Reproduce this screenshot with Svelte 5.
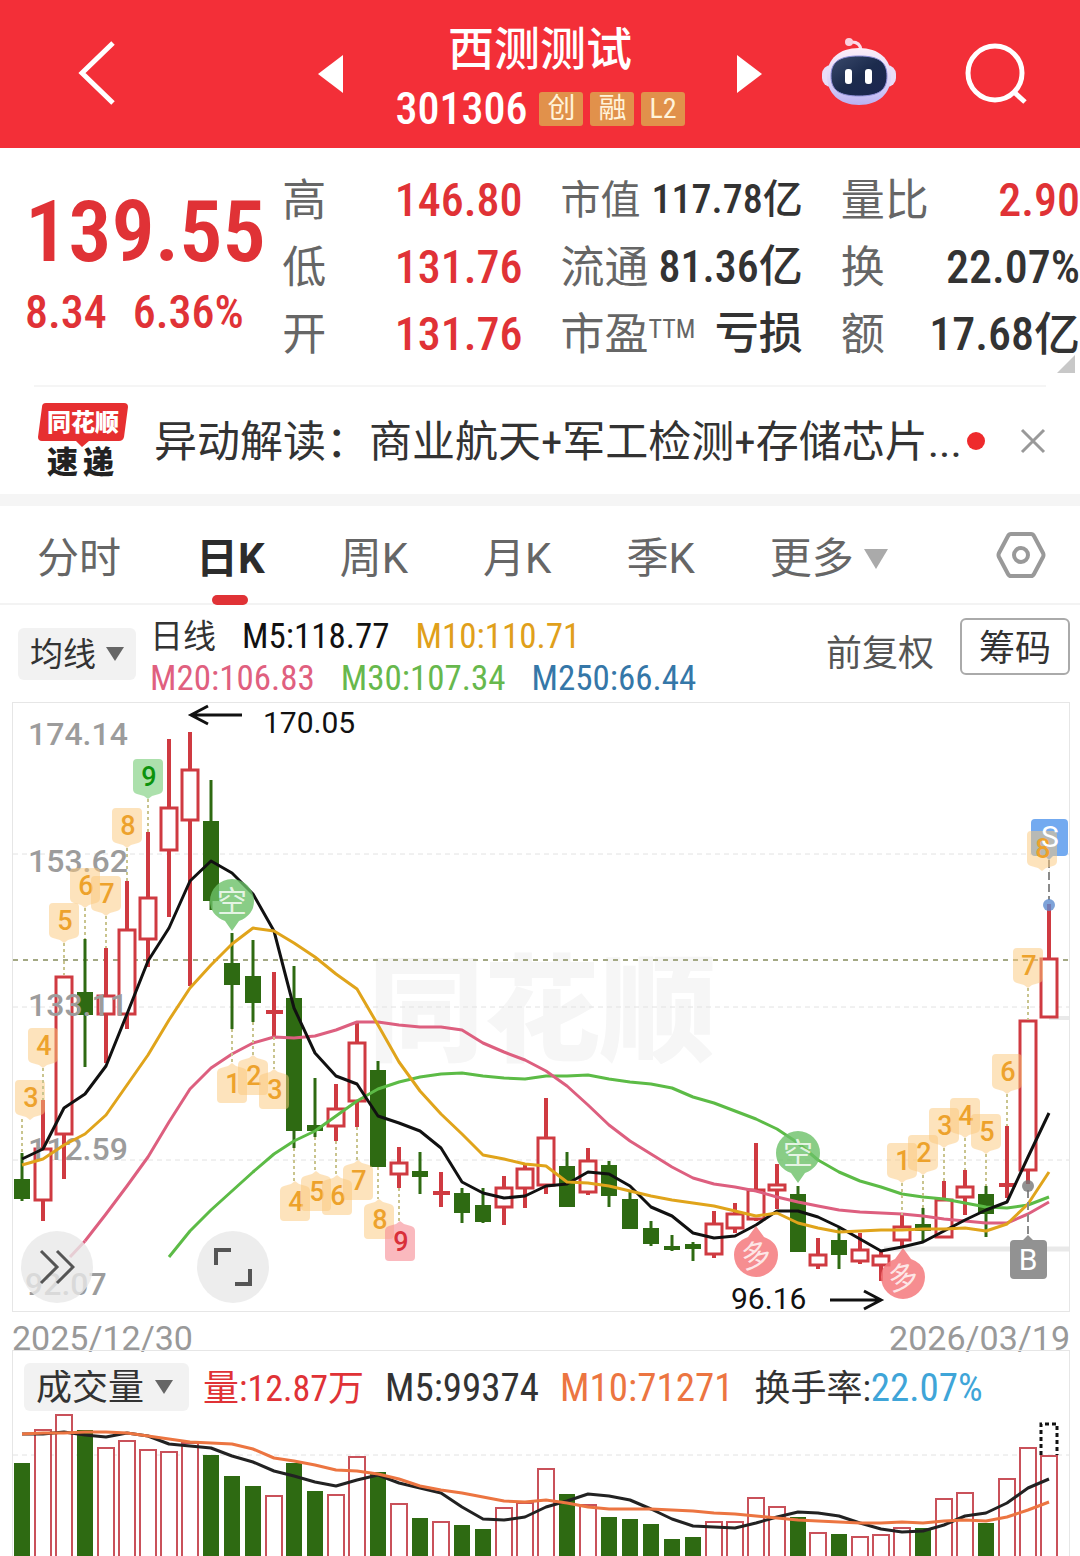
<script lang="ts">
    const tabs = ['分时', '日K', '周K', '月K', '季K'];
    let activeTab = $state('日K');
    let newsOpen = $state(true);

    const FIRST_X = 22;
    const STEP = 20.96;
    const x = (i: number) => Math.round(FIRST_X + i * STEP);

    // [rising, high, body top, body bottom, low]
    const candles = [
        [0, 1153, 1179, 1199, 1201], [1, 1100, 1148, 1201, 1221], [1, 976, 976, 1135, 1179],
        [0, 939, 992, 1015, 1067], [1, 948, 995, 1015, 1063], [1, 881, 929, 1015, 1029],
        [1, 832, 897, 940, 967], [1, 739, 807, 851, 917], [1, 732, 769, 821, 986],
        [0, 780, 821, 901, 910], [0, 933, 963, 985, 1029], [0, 940, 976, 1003, 1022],
        [1, 972, 1012, 1012, 1037], [0, 966, 998, 1131, 1148], [0, 1078, 1125, 1131, 1137],
        [1, 1084, 1108, 1127, 1141], [1, 1023, 1042, 1102, 1127], [0, 1061, 1070, 1167, 1167],
        [1, 1147, 1162, 1175, 1188], [0, 1152, 1171, 1177, 1194], [1, 1172, 1193, 1193, 1207],
        [0, 1188, 1193, 1213, 1223], [0, 1188, 1205, 1222, 1223], [1, 1176, 1187, 1208, 1225],
        [1, 1165, 1168, 1189, 1208], [1, 1098, 1137, 1186, 1194], [0, 1152, 1166, 1207, 1207],
        [1, 1148, 1160, 1193, 1195], [0, 1161, 1165, 1196, 1207], [0, 1192, 1199, 1229, 1229],
        [0, 1221, 1228, 1244, 1246], [0, 1235, 1246, 1250, 1251], [0, 1242, 1244, 1249, 1261],
        [1, 1211, 1223, 1255, 1258], [1, 1203, 1213, 1229, 1233], [1, 1143, 1189, 1220, 1221],
        [1, 1164, 1184, 1191, 1209], [0, 1186, 1194, 1252, 1252], [1, 1238, 1254, 1266, 1269],
        [0, 1228, 1240, 1255, 1269], [1, 1233, 1249, 1262, 1264], [1, 1251, 1255, 1266, 1281],
        [1, 1215, 1226, 1241, 1247], [0, 1208, 1224, 1231, 1241], [1, 1181, 1199, 1238, 1238],
        [1, 1170, 1186, 1198, 1215], [0, 1186, 1194, 1214, 1237], [1, 1126, 1185, 1185, 1198],
        [1, 1020, 1020, 1171, 1184], [1, 904, 958, 1018, 1018]
    ];

    const averages = [
        {color: '#5cbb46', from: 7, ys: [1257, 1231, 1210, 1191, 1172, 1154, 1141, 1131, 1116, 1101, 1089, 1082, 1077, 1074, 1073, 1076, 1078, 1079, 1076, 1076, 1075, 1079, 1082, 1084, 1088, 1097, 1103, 1111, 1119, 1129, 1143, 1160, 1172, 1181, 1187, 1194, 1197, 1199, 1203, 1207, 1208, 1205, 1197]},
        {color: '#dd5f7f', from: 3, ys: [1241, 1214, 1186, 1157, 1122, 1089, 1068, 1054, 1043, 1037, 1038, 1036, 1030, 1022, 1022, 1025, 1027, 1027, 1030, 1043, 1052, 1060, 1071, 1086, 1105, 1125, 1141, 1154, 1167, 1178, 1184, 1187, 1191, 1197, 1202, 1206, 1210, 1212, 1213, 1214, 1216, 1219, 1221, 1223, 1223, 1214, 1202]},
        {color: '#111111', from: 0, ys: [1159, 1149, 1108, 1094, 1066, 1014, 961, 928, 881, 861, 873, 894, 931, 1008, 1053, 1076, 1084, 1116, 1123, 1131, 1148, 1182, 1193, 1198, 1196, 1186, 1184, 1172, 1174, 1186, 1207, 1216, 1233, 1238, 1236, 1225, 1211, 1211, 1217, 1227, 1239, 1251, 1247, 1242, 1231, 1220, 1210, 1202, 1157, 1113]},
        {color: '#e0a41b', from: 0, ys: [1165, 1159, 1145, 1134, 1115, 1085, 1055, 1020, 988, 965, 944, 928, 931, 943, 957, 974, 989, 1025, 1062, 1091, 1114, 1134, 1155, 1159, 1164, 1166, 1182, 1183, 1186, 1191, 1196, 1200, 1203, 1206, 1211, 1216, 1213, 1223, 1228, 1232, 1231, 1230, 1230, 1229, 1229, 1228, 1231, 1224, 1204, 1172]}
    ];

    // [digit, candle, box centre, box top, dash start, dash end]
    const topTags = [
        [3, 0, 30, 1080, 1119, 1153], [4, 1, 43, 1028, 1068, 1100], [5, 2, 64, 903, 943, 975],
        [6, 3, 85, 868, 908, 939], [7, 4, 106, 876, 916, 948], [8, 5, 127, 808, 848, 881],
        [9, 6, 148, 759, 799, 832], [1, 42, 902, 1143, 1183, 1215], [2, 43, 923, 1135, 1175, 1208],
        [3, 44, 944, 1108, 1148, 1181], [4, 45, 965, 1098, 1138, 1170], [5, 46, 986, 1114, 1154, 1186],
        [6, 47, 1007, 1054, 1094, 1126], [7, 48, 1028, 948, 988, 1020], [8, 49, 1042, 831, 871, 871]
    ];
    const bottomTags = [
        [1, 10, 232, 1067, 1029, 1063], [2, 11, 253, 1059, 1022, 1055], [3, 12, 274, 1073, 1037, 1069],
        [4, 13, 295, 1185, 1148, 1181], [5, 14, 316, 1175, 1137, 1171], [6, 15, 337, 1179, 1141, 1175],
        [7, 16, 358, 1164, 1127, 1160], [8, 17, 379, 1203, 1167, 1199], [9, 18, 400, 1225, 1188, 1221]
    ];

    const axis = [[28, 745, '174.14'], [28, 872, '153.62'], [28, 1016, '133.11'], [28, 1160, '112.59'], [25, 1295, '92.07']];

    // [rising, bar top]
    const volumes = [
        [0, 1463], [1, 1430], [1, 1415], [0, 1430], [1, 1448], [1, 1441], [1, 1450], [1, 1452], [1, 1443], [0, 1455],
        [0, 1476], [0, 1486], [1, 1496], [0, 1463], [0, 1491], [1, 1495], [1, 1457], [0, 1472], [1, 1504], [0, 1518],
        [1, 1522], [0, 1525], [0, 1529], [1, 1508], [1, 1503], [1, 1469], [0, 1494], [1, 1505], [0, 1517], [0, 1519],
        [0, 1524], [0, 1539], [0, 1537], [1, 1522], [1, 1522], [1, 1498], [1, 1507], [0, 1517], [1, 1533], [0, 1534],
        [1, 1537], [1, 1535], [1, 1528], [0, 1528], [1, 1499], [1, 1493], [0, 1523], [1, 1479], [1, 1448], [1, 1456]
    ];
    const volumeAverages = [
        {color: '#222222', from: 0, ys: [1434, 1434, 1432, 1435, 1437, 1433, 1436, 1444, 1446, 1448, 1456, 1462, 1471, 1476, 1482, 1486, 1480, 1475, 1483, 1488, 1493, 1507, 1519, 1520, 1517, 1507, 1501, 1494, 1496, 1500, 1509, 1519, 1526, 1527, 1528, 1523, 1517, 1512, 1513, 1516, 1523, 1529, 1532, 1531, 1525, 1516, 1513, 1503, 1488, 1479]},
        {color: '#ec7541', from: 0, ys: [1434, 1433, 1433, 1432, 1432, 1433, 1436, 1439, 1442, 1443, 1444, 1449, 1458, 1461, 1465, 1470, 1471, 1474, 1479, 1486, 1490, 1493, 1497, 1501, 1502, 1500, 1503, 1507, 1509, 1509, 1509, 1510, 1511, 1513, 1514, 1516, 1518, 1520, 1521, 1522, 1523, 1523, 1522, 1523, 1521, 1520, 1521, 1517, 1510, 1502]}
    ];

    const line = (from: number, ys: number[]) => ys.map((y, i) => `${x(from + i)},${y}`).join(' ');

    const tagDown = (cx: number, top: number) =>
        `M${cx - 11} ${top}h22q4 0 4 4v26q0 4-4 5l-7 2-4 3-4-3-7-2q-4-1-4-5v-26q0-4 4-4z`;
    const tagUp = (cx: number, top: number) =>
        `M${cx - 11} ${top + 36}h22q4 0 4-4v-26q0-4-4-5l-7-2-4-3-4 3-7 2q-4 1-4 5v26q0 4 4 4z`;
</script>

<main>
    <header class="top">
        <button class="icon back" aria-label="返回">
            <svg width="40" height="68" viewBox="0 0 40 68"><path d="M36 3 5 33l31 30" fill="none" stroke="#fff" stroke-width="5"/></svg>
        </button>
        <div class="stock">
            <button class="icon" aria-label="上一只">
                <svg width="25" height="38" viewBox="0 0 25 38"><path d="M25 0v38L0 19z" fill="#fff"/></svg>
            </button>
            <div class="stock-title">
                <h1>西测测试</h1>
                <p class="code"><b>301306</b><span>创</span><span>融</span><span>L2</span></p>
            </div>
            <button class="icon" aria-label="下一只">
                <svg width="25" height="38" viewBox="0 0 25 38"><path d="M0 0v38l25-19z" fill="#fff"/></svg>
            </button>
        </div>
        <div class="top-actions">
            <button class="icon" aria-label="智能助手">
                <svg width="74" height="72" viewBox="0 0 74 72">
                    <defs>
                        <linearGradient id="shell" x1="0" y1="0" x2="0" y2="1">
                            <stop offset="0" stop-color="#fdeef8"/><stop offset=".6" stop-color="#dcd4f8"/><stop offset="1" stop-color="#b9b0f2"/>
                        </linearGradient>
                        <linearGradient id="visor" x1="0" y1="0" x2="1" y2="1">
                            <stop offset="0" stop-color="#3a4a6c"/><stop offset=".5" stop-color="#1c2b4d"/><stop offset="1" stop-color="#1b2450"/>
                        </linearGradient>
                    </defs>
                    <path d="M28 4q10-1 11 8" fill="none" stroke="#fbdcea" stroke-width="3"/>
                    <circle cx="27" cy="4" r="4" fill="#fbd0de"/>
                    <rect x="0" y="27" width="74" height="22" rx="9" fill="#e9ddf8"/>
                    <path d="M37 10c20 0 32 11 32 28S57 67 37 67 5 55 5 38s12-28 32-28z" fill="url(#shell)"/>
                    <path d="M37 18c20 0 28 6 28 20s-8 20-28 20S9 52 9 38s8-20 28-20z" fill="url(#visor)" stroke="#8f8fd8" stroke-width="1"/>
                    <rect x="23" y="31" width="7" height="15" rx="3" fill="#fff"/>
                    <rect x="43" y="31" width="7" height="15" rx="3" fill="#fff"/>
                </svg>
            </button>
            <button class="icon" aria-label="搜索">
                <svg width="62" height="62" viewBox="0 0 62 62"><g fill="none" stroke="#fff" stroke-width="5"><circle cx="30" cy="30" r="27"/><path d="m49 49 11 10"/></g></svg>
            </button>
        </div>
    </header>

    <section class="quote">
        <div class="price">
            <strong>139.55</strong>
            <p><span>8.34</span><span>6.36%</span></p>
        </div>
        <dl>
            <div><dt>高</dt><dd class="up">146.80</dd></div>
            <div><dt>低</dt><dd class="up">131.76</dd></div>
            <div><dt>开</dt><dd class="up">131.76</dd></div>
        </dl>
        <dl class="cap">
            <div class="small"><dt>市值</dt><dd>117.78亿</dd></div>
            <div><dt>流通</dt><dd>81.36亿</dd></div>
            <div><dt>市盈<sup>TTM</sup></dt><dd>亏损</dd></div>
        </dl>
        <dl>
            <div><dt>量比</dt><dd class="up">2.90</dd></div>
            <div><dt>换</dt><dd>22.07%</dd></div>
            <div><dt>额</dt><dd>17.68亿</dd></div>
        </dl>
        <svg class="corner" width="18" height="18" viewBox="0 0 18 18"><path d="M18 0v18H0z" fill="#c8c8c8"/></svg>
    </section>

    {#if newsOpen}
        <section class="news">
            <svg class="logo" width="90" height="76" viewBox="0 0 90 76" role="img" aria-label="同花顺速递">
                <path d="M8 0h78q4 0 4 4l-4 30q-1 4-5 4H51l-7 6-6-6H4q-4 0-4-4L4 4q0-4 4-4z" fill="#e62f30"/>
                <text x="9" y="28" font-size="24" fill="#fff">同花顺</text>
                <text x="9" y="70" font-size="31" fill="#222">速</text>
                <text x="45" y="70" font-size="31" fill="#222">递</text>
            </svg>
            <a href="#news">异动解读：商业航天+军工检测+存储芯片...</a>
            <i class="dot"></i>
            <button class="icon" aria-label="关闭" onclick={() => newsOpen = false}>
                <svg width="26" height="26" viewBox="0 0 26 26"><path d="m2 2 22 22M24 2 2 24" stroke="#999" stroke-width="3"/></svg>
            </button>
        </section>
    {/if}

    <nav class="tabs">
        {#each tabs as tab (tab)}
            <button class:active={tab === activeTab} onclick={() => activeTab = tab}>{tab}</button>
        {/each}
        <button class="more">更多<svg width="24" height="20" viewBox="0 0 24 20"><path d="M0 0h24L12 20z" fill="#aaa"/></svg></button>
        <button class="settings" aria-label="设置">
            <svg width="50" height="48" viewBox="0 0 50 48"><g fill="none" stroke="#999" stroke-width="4"><path d="M15 3h20q2 0 3 2l9 17q1 2 0 4l-9 17q-1 2-3 2H15q-2 0-3-2L3 26q-1-2 0-4l9-17q1-2 3-2z"/><circle cx="25" cy="24" r="7"/></g></svg>
        </button>
    </nav>

    <section class="indicators">
        <label class="pick">
            <select aria-label="主图指标"><option>均线</option><option>布林</option></select>
            <svg width="18" height="14" viewBox="0 0 18 14"><path d="M0 0h18L9 14z" fill="#666"/></svg>
        </label>
        <div class="legend">
            <p><span class="period">日线</span><span class="m5">M5:118.77</span><span class="m10">M10:110.71</span></p>
            <p><span class="m20">M20:106.83</span><span class="m30">M30:107.34</span><span class="m250">M250:66.44</span></p>
        </div>
        <button class="adjust">前复权</button>
        <button class="chips">筹码</button>
    </section>

    <section class="frame">
        <svg class="chart" viewBox="13 703 1056 608">
            <text class="mark" x="368" y="1052" font-size="116">同花顺</text>
            <g stroke="#e2e2e2" stroke-dasharray="5 4">
                <path d="M13 854h1056M13 1007h1056M13 1160h1056"/>
            </g>
            <path d="M13 960h1056" stroke="#a3a883" stroke-width="2" stroke-dasharray="5 5"/>
            <path d="M884 1249h185" stroke="#e9e9e9" stroke-width="5"/>
            <path d="M1049 1018h20" stroke="#e9e9e9" stroke-width="4"/>

            {#each candles as [rising, high, top, bottom, low], i}
                {#if rising && top === bottom}
                    <path d={`M${x(i)} ${high}V${low}M${x(i) - 8} ${top}h17`} stroke="#cf3a41" stroke-width="4"/>
                {:else if rising}
                    <path d={`M${x(i)} ${high}V${top}M${x(i)} ${bottom}V${low}`} stroke="#cf3a41" stroke-width="4"/>
                    <rect x={x(i) - 8} y={top + 1} width="16" height={bottom - top - 2} fill="#fff" stroke="#cf3a41" stroke-width="3"/>
                {:else}
                    <path d={`M${x(i)} ${high}V${low}`} stroke="#2e6a12" stroke-width="3"/>
                    <rect x={x(i) - 8} y={top} width="16" height={bottom - top} fill="#2e6a12"/>
                {/if}
            {/each}

            <g class="axis">
                {#each axis as [left, base, label]}
                    <text x={left} y={base}>{label}</text>
                {/each}
            </g>

            {#each averages as {color, from, ys}}
                <polyline points={line(from, ys)} fill="none" stroke={color} stroke-width="3" stroke-linejoin="round"/>
            {/each}
            <path d="M70 1257 85 1241" stroke="#dd5f7f" stroke-width="3"/>

            <path d="M1049 860V900" stroke="#8a8a8a" stroke-width="2" stroke-dasharray="8 4"/>
            <circle cx="1049" cy="905" r="6" fill="#5e8ccf" fill-opacity=".8"/>
            <path d="M1035 819h29q4 0 4 4v29q0 4-4 4h-11l-4 4-4-4h-10q-4 0-4-4v-29q0-4 4-4z" fill="#73aaf0"/>
            <path d="M1028 1190v45" stroke="#8a8a8a" stroke-width="2" stroke-dasharray="8 4"/>
            <circle cx="1028" cy="1186" r="6" fill="#777" fill-opacity=".8"/>
            <path d="M1014 1240h9l5-5 5 5h10q4 0 4 4v31q0 4-4 4h-29q-4 0-4-4v-31q0-4 4-4z" fill="#929292"/>

            {#each topTags as [digit, i, cx, top, from, to]}
                <g class="tag" class:green={digit === 9}>
                    <path class="dash" d={`M${x(i)} ${from}V${to}`}/>
                    <path class="box" d={tagDown(cx, top)}/>
                    <text x={cx + 1} y={top + 27}>{digit}</text>
                </g>
            {/each}
            {#each bottomTags as [digit, i, cx, top, from, to]}
                <g class="tag" class:pink={digit === 9}>
                    <path class="dash" d={`M${x(i)} ${from}V${to}`}/>
                    <path class="box" d={tagUp(cx, top)}/>
                    <text x={cx + 1} y={top + 26}>{digit}</text>
                </g>
            {/each}

            <g class="letter">
                <text x="1050" y="847">S</text>
                <text x="1028" y="1270">B</text>
            </g>

            <g class="pin">
                {#each [[232, 901], [798, 1153]] as [cx, cy]}
                    <path d={`M${cx - 22} ${cy}a22 22 0 1 1 44 0q0 14-15 20l-7 10-7-10q-15-6-15-20z`} fill="#6cc168" fill-opacity=".8"/>
                    <text x={cx} y={cy + 11}>空</text>
                {/each}
                {#each [[756, 1255], [903, 1277]] as [cx, cy]}
                    <path d={`M${cx - 22} ${cy}a22 22 0 1 0 44 0q0-13-14-18l-8-11-8 11q-14 5-14 18z`} fill="#f4797d" fill-opacity=".85"/>
                    <text x={cx} y={cy + 11} transform={`rotate(-12 ${cx} ${cy})`}>多</text>
                {/each}
            </g>

            <g class="extreme">
                <text x="263" y="733">170.05</text>
                <path d="M191 715h51M208 706l-17 9 17 9"/>
                <text x="731" y="1309">96.16</text>
                <path d="M830 1300h51M864 1291l17 9-17 9"/>
            </g>
        </svg>
        <div class="float">
            <button aria-label="展开">
                <svg width="36" height="36" viewBox="0 0 36 36"><path d="m2 2 16 16L2 34M18 2l16 16-16 16" fill="none" stroke="#555" stroke-width="3"/></svg>
            </button>
            <button aria-label="全屏">
                <svg width="40" height="40" viewBox="0 0 40 40"><path d="M3 18V3h15M37 22v15H22" fill="none" stroke="#555" stroke-width="4"/></svg>
            </button>
        </div>
    </section>

    <div class="dates"><time>2025/12/30</time><time>2026/03/19</time></div>

    <section class="frame volume">
        <div class="volume-head">
            <label class="pick">
                <select aria-label="副图指标"><option>成交量</option><option>成交额</option></select>
                <svg width="18" height="14" viewBox="0 0 18 14"><path d="M0 0h18L9 14z" fill="#666"/></svg>
            </label>
            <span class="up">量:12.87万</span>
            <span class="average">M5:99374</span>
            <span class="average orange">M10:71271</span>
            <span>换手率:<b class="average">22.07%</b></span>
        </div>
        <svg class="chart" viewBox="13 1411 1056 145">
            <path d="M13 1455h1056" stroke="#e2e2e2" stroke-dasharray="5 4"/>
            {#each volumes as [rising, top], i}
                {#if rising}
                    <path d={`M${x(i) - 8} 1556V${top}h16V1556`} fill="#fff" stroke="#c9515a" stroke-width="2"/>
                {:else}
                    <rect x={x(i) - 8} y={top} width="16" height={1556 - top} fill="#2e6a12"/>
                {/if}
            {/each}
            <path d="M1041 1455v-31h16v31" fill="none" stroke="#111" stroke-width="3" stroke-dasharray="4 3"/>
            {#each volumeAverages as {color, from, ys}}
                <polyline points={line(from, ys)} fill="none" stroke={color} stroke-width="3" stroke-linejoin="round"/>
            {/each}
        </svg>
    </section>
</main>

<style>
    :global(body) {
        background: #fff;
    }

    main {
        --num: "Roboto Condensed", "Liberation Sans Narrow", Roboto, "Noto Sans CJK SC", sans-serif;
        --red: #e03236;
        overflow: hidden;
        color: #333;
        font-family: Roboto, "Noto Sans CJK SC", sans-serif;
        line-height: 1;
    }

    h1, p, dl, dd {
        margin: 0;
    }

    button, select {
        padding: 0;
        border: 0;
        background: none;
        color: inherit;
        font: inherit;
        cursor: pointer;
    }

    svg {
        display: block;
        flex: none;
    }

    .up {
        color: var(--red);
    }

    .top {
        display: grid;
        grid-template-columns: 1fr auto 1fr;
        align-items: center;
        height: 148px;
        padding: 0 53px;
        background: #f32f38;
        color: #fff;

        & .back {
            justify-self: start;
            margin-left: 24px;
        }
    }

    .stock {
        display: flex;
        align-items: center;
        gap: 52px;
    }

    .stock-title {
        display: flex;
        flex-direction: column;
        align-items: center;
        gap: 15px;
        padding-top: 8px;

        & h1 {
            font-size: 46px;
            font-weight: 500;
        }
    }

    .code {
        display: flex;
        align-items: center;
        gap: 7px;
        font-family: var(--num);
        font-size: 44px;

        & b {
            margin-right: 5px;
            font-weight: 500;
        }

        & span {
            padding: 3px 8px;
            border-radius: 3px;
            background: #e1914b;
            color: #fff3da;
            font-size: 28px;
        }
    }

    .top-actions {
        display: flex;
        justify-content: flex-end;
        align-items: center;
        gap: 69px;
    }

    .quote {
        position: relative;
        display: grid;
        grid-template-columns: minmax(0, 244fr) minmax(0, 240fr) minmax(0, 242fr) minmax(0, 239fr);
        column-gap: 38px;
        padding: 18px 0;
        font-family: var(--num);

        & dl > div {
            display: flex;
            justify-content: space-between;
            align-items: center;
            height: 67px;
            white-space: nowrap;
        }

        & dt {
            padding-top: 3px;
            color: #666;
            font-size: 44px;
        }

        & dd {
            font-size: 46px;
            font-weight: 500;
        }

        & .cap dd {
            font-size: 44px;
        }

        & .small dt, & .small dd {
            font-size: 40px;
        }

        & sup {
            font-size: 26px;
            vertical-align: 12px;
        }
    }

    .price {
        display: flex;
        flex-direction: column;
        align-items: flex-start;
        gap: 14px;
        padding: 23px 0 0 25px;
        color: var(--red);
        white-space: nowrap;

        & strong {
            font-size: 86px;
            font-weight: 600;
        }

        & p {
            display: flex;
            gap: 26px;
            font-size: 46px;
            font-weight: 500;
        }
    }

    .corner {
        position: absolute;
        right: 5px;
        bottom: 12px;
    }

    .news {
        display: flex;
        align-items: center;
        height: 107px;
        margin: 0 34px;
        padding-left: 4px;
        border-top: 2px solid #f5f5f5;

        & a {
            flex: 1;
            margin-left: 26px;
            padding-top: 4px;
            color: #333;
            font-family: var(--num);
            font-size: 43px;
            text-decoration: none;
            white-space: nowrap;
        }

        & .dot {
            flex: none;
            width: 18px;
            height: 18px;
            margin-right: 35px;
            border-radius: 50%;
            background: #ee2a2c;
        }
    }

    .logo {
        overflow: visible;
        font-family: "Noto Sans CJK SC", sans-serif;
        font-weight: 900;
    }

    .mark {
        fill: #f6f6f6;
        font-family: "Noto Sans CJK SC", sans-serif;
        font-weight: 900;
    }

    .tabs {
        display: flex;
        align-items: center;
        gap: 75px;
        height: 97px;
        padding: 0 34px 0 37px;
        border-top: 12px solid #f5f5f5;
        border-bottom: 2px solid #f3f3f3;
        color: #666;
        font-size: 42px;
        white-space: nowrap;

        & button {
            position: relative;
            padding-top: 8px;
        }

        & .active {
            color: #2c2c2c;
            font-weight: 700;
        }

        & .active::after {
            content: "";
            position: absolute;
            left: 50%;
            bottom: -25px;
            width: 36px;
            height: 10px;
            margin-left: -18px;
            border-radius: 5px;
            background: var(--red);
        }

        & .more {
            display: flex;
            align-items: center;
            gap: 10px;
        }

        & .settings {
            margin-left: auto;
            padding-top: 0;
        }
    }

    .indicators {
        display: flex;
        align-items: center;
        height: 97px;
        padding: 0 10px 0 18px;
        white-space: nowrap;
    }

    .pick {
        display: flex;
        align-items: center;
        gap: 10px;
        height: 52px;
        padding: 0 12px;
        border-radius: 6px;
        background: #f2f2f2;
        font-size: 33px;

        & select {
            padding-top: 2px;
            appearance: none;
        }

        & svg {
            pointer-events: none;
        }
    }

    .legend {
        flex: 1;
        display: flex;
        flex-direction: column;
        gap: 7px;
        margin-left: 14px;
        padding-top: 7px;
        font-family: var(--num);
        font-size: 35px;

        & p {
            display: flex;
            align-items: center;
            gap: 26px;
        }

        & .period {
            font-size: 33px;
        }

        & .m5 {
            color: #111;
        }

        & .m10 {
            color: #e0a01b;
        }

        & .m20 {
            color: #e0607f;
        }

        & .m30 {
            color: #67b84d;
        }

        & .m250 {
            color: #3577a8;
        }
    }

    .adjust {
        margin-right: 26px;
        color: #555;
        font-size: 36px;
    }

    .chips {
        height: 57px;
        padding: 4px 17px 0;
        margin-bottom: 14px;
        border: 2px solid #aaa;
        border-radius: 6px;
        font-size: 36px;
    }

    .frame {
        position: relative;
        margin: 0 10px 0 12px;
        border: 1px solid #e6e6e6;
    }

    .chart {
        width: 100%;
        overflow: visible;
        font-family: Roboto, "Noto Sans CJK SC", sans-serif;
    }

    .axis {
        fill: #9c9c9c;
        font-size: 32px;
        font-weight: 500;
    }

    .tag {
        & .dash {
            stroke: #c9c48e;
            stroke-width: 2;
            stroke-dasharray: 3 3;
        }

        & .box {
            fill: #fbc77a;
            fill-opacity: .5;
        }

        & text {
            fill: #eda22c;
            font-size: 27px;
            font-weight: 500;
            text-anchor: middle;
        }

        &.green {
            & .box {
                fill: #7fcf80;
                fill-opacity: .65;
            }

            & text {
                fill: #0c930c;
            }
        }

        &.pink {
            & .box {
                fill: #f68a92;
                fill-opacity: .6;
            }

            & text {
                fill: #d9303a;
            }
        }
    }

    .pin text {
        fill: #fff;
        fill-opacity: .8;
        font-size: 30px;
        text-anchor: middle;
    }

    .letter {
        fill: #fff;
        font-size: 30px;
        text-anchor: middle;
    }

    .extreme {
        & text {
            fill: #111;
            font-size: 30px;
        }

        & path {
            fill: none;
            stroke: #111;
            stroke-width: 3;
        }
    }

    .float {
        position: absolute;
        left: 8px;
        bottom: 8px;
        display: flex;
        gap: 104px;

        & button {
            display: grid;
            place-items: center;
            width: 72px;
            height: 72px;
            border-radius: 50%;
            background: rgb(232 232 232 / .8);
        }
    }

    .dates {
        display: flex;
        justify-content: space-between;
        box-sizing: border-box;
        height: 38px;
        margin: 0 10px 0 12px;
        padding-top: 9px;
        color: #999;
        font-size: 34px;
    }

    .volume {
        border-bottom: 0;
    }

    .volume-head {
        display: flex;
        align-items: center;
        gap: 21px;
        height: 60px;
        padding: 12px 0 0 11px;
        box-sizing: border-box;
        font-family: var(--num);
        font-size: 36px;
        white-space: nowrap;

        & span {
            padding-top: 3px;
        }

        & .pick {
            height: 48px;
            margin-right: -7px;
            padding-right: 16px;
            font-size: 36px;
        }

        & .average {
            font-size: 39px;
            font-weight: 400;
        }

        & .orange {
            color: #ec7541;
        }

        & b {
            color: #3fa5d8;
        }
    }
</style>
